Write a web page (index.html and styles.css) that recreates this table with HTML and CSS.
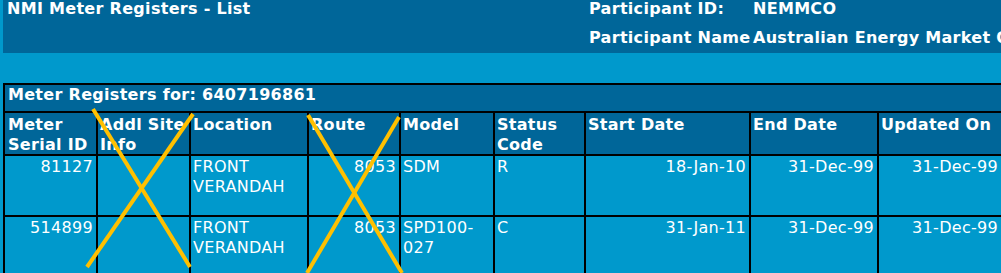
FILE: index.html
```html
<!DOCTYPE html>
<html lang="en">
<head>
<meta charset="utf-8">
<title>NMI Meter Registers - List</title>
<link rel="stylesheet" href="styles.css">
</head>
<body>
<header class="page-head">
  <h1 class="page-title">NMI Meter Registers - List</h1>
  <dl class="participant">
    <dt>Participant ID:</dt><dd>NEMMCO</dd>
    <dt>Participant Name</dt><dd>Australian Energy Market Operator</dd>
  </dl>
</header>
<main class="content">
  <table class="registers">
    <colgroup>
      <col class="c1"><col class="c2"><col class="c3"><col class="c4"><col class="c5"><col class="c6"><col class="c7"><col class="c8"><col class="c9">
    </colgroup>
    <thead>
      <tr class="caption-row"><th colspan="9">Meter Registers for: 6407196861</th></tr>
      <tr class="head-row">
        <th>Meter Serial ID</th>
        <th>Addl Site Info</th>
        <th>Location</th>
        <th>Route</th>
        <th>Model</th>
        <th>Status Code</th>
        <th>Start Date</th>
        <th>End Date</th>
        <th>Updated On</th>
      </tr>
    </thead>
    <tbody>
      <tr class="data-row">
        <td class="num">81127</td>
        <td></td>
        <td>FRONT VERANDAH</td>
        <td class="num">8053</td>
        <td>SDM</td>
        <td>R</td>
        <td class="num">18-Jan-10</td>
        <td class="num">31-Dec-99</td>
        <td class="num">31-Dec-99</td>
      </tr>
      <tr class="data-row">
        <td class="num">514899</td>
        <td></td>
        <td>FRONT VERANDAH</td>
        <td class="num">8053</td>
        <td>SPD100-027</td>
        <td>C</td>
        <td class="num">31-Jan-11</td>
        <td class="num">31-Dec-99</td>
        <td class="num">31-Dec-99</td>
      </tr>
    </tbody>
  </table>
</main>
<svg class="strike" width="1001" height="273" viewBox="0 0 1001 273" aria-hidden="true">
  <line x1="93" y1="109" x2="190" y2="267"/>
  <line x1="193" y1="114" x2="87" y2="267"/>
  <line x1="308" y1="115" x2="402" y2="273"/>
  <line x1="399" y1="117" x2="307" y2="273"/>
</svg>
</body>
</html>
```
FILE: styles.css
```css
html, body {
  margin: 0;
  padding: 0;
}
body {
  background: #0099cc;
  color: #ffffff;
  font-family: "DejaVu Sans", Verdana, sans-serif;
  font-size: 16px;
  letter-spacing: 0.3px;
  width: 1001px;
  height: 273px;
  overflow: hidden;
  position: relative;
}
.page-head {
  margin-left: 3px;
  height: 53px;
  background: #006699;
  display: flex;
  align-items: flex-start;
}
.page-title {
  margin: 0;
  width: 586px;
  flex: none;
  box-sizing: border-box;
  padding-left: 4px;
  font-size: 16px;
  line-height: 17px;
  font-weight: bold;
  white-space: nowrap;
}
.participant {
  margin: 0;
  display: grid;
  grid-template-columns: 164px auto;
  row-gap: 12px;
  line-height: 17px;
  font-weight: bold;
  white-space: nowrap;
}
.participant dt,
.participant dd {
  margin: 0;
}
.content {
  margin-top: 30px;
  margin-left: 3px;
}
.registers {
  table-layout: fixed;
  width: 1006px;
  border-collapse: separate;
  border-spacing: 0;
  border-top: 2px solid #000;
  border-left: 2px solid #000;
  line-height: 19.5px;
}
.registers col.c1 { width: 93px; }
.registers col.c2 { width: 93px; }
.registers col.c3 { width: 118px; }
.registers col.c4 { width: 92px; }
.registers col.c5 { width: 94px; }
.registers col.c6 { width: 91px; }
.registers col.c7 { width: 165px; }
.registers col.c8 { width: 128px; }
.registers col.c9 { width: 130px; }
.registers th,
.registers td {
  box-sizing: border-box;
  border-right: 2px solid #000;
  border-bottom: 2px solid #000;
  padding: 1px 3px 0 2px;
  vertical-align: top;
  text-align: left;
}
.registers th {
  background: #006699;
  font-weight: bold;
}
.caption-row th {
  height: 28px;
  padding-left: 3px;
  padding-top: 0;
}
.head-row th {
  height: 41px;
  padding-top: 2px;
}
.head-row th:first-child {
  padding-left: 3px;
}
.data-row td {
  height: 61px;
  background: #0099cc;
}
.registers td.num {
  text-align: right;
}
.registers td.num:last-child {
  padding-right: 9px;
}
.strike {
  position: absolute;
  left: 0;
  top: 0;
  pointer-events: none;
}
.strike line {
  stroke: #ffc000;
  stroke-width: 4;
}
```
